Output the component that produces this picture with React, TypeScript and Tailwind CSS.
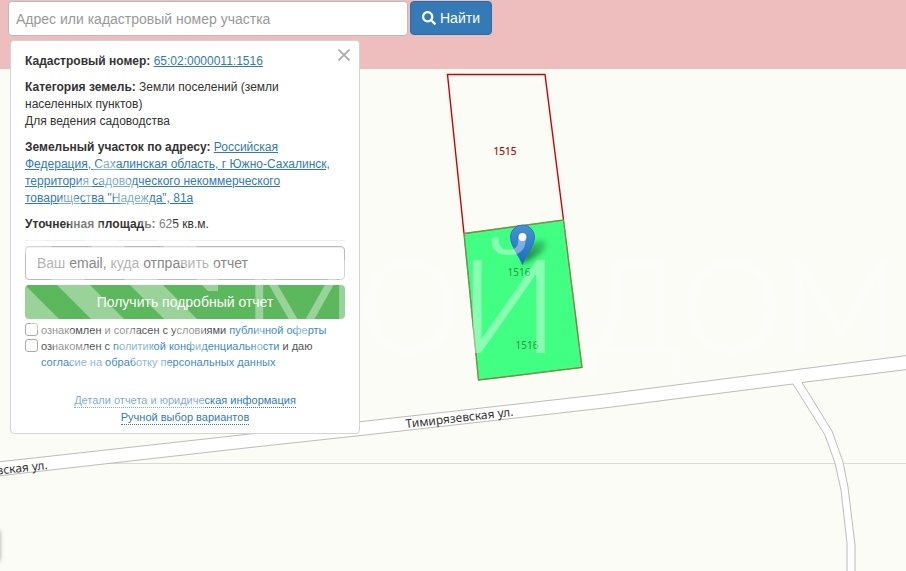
import React, { useState } from "react";
import { FaSearch } from "react-icons/fa";

const MapLayer: React.FC = () => (
  <svg
    className="absolute left-0 top-0 h-[571px] w-[906px] overflow-visible"
    viewBox="0 0 906 571"
    aria-hidden="true"
  >
    <defs>
      <linearGradient id="pin" x1="0" y1="0" x2="0" y2="1">
        <stop offset="0" stopColor="#4694d4" />
        <stop offset="1" stopColor="#1b6bc2" />
      </linearGradient>
      <linearGradient id="pinShadow" x1="0" y1="1" x2="1" y2="0">
        <stop offset="0.2" stopColor="#000" stopOpacity="0.5" />
        <stop offset="1" stopColor="#000" stopOpacity="0.1" />
      </linearGradient>
      <filter id="soft" x="-30%" y="-30%" width="160%" height="160%">
        <feGaussianBlur stdDeviation="2.5" />
      </filter>
    </defs>

    <path d="M0 463.5H906" stroke="#d8dad5" strokeWidth="1" />

    {/* Streets */}
    <path
      d="M-5 462.3L250 434L370 420.6L600 394.7L911 355V369L802 382.5L832 431L843 462L848 487L855 545V576H847V543L841 490L835 463L825 435L793 384L600 408.5L370 434.5L250 447.5L-5 476.3Z"
      fill="#fff"
      stroke="#bcbcb8"
      strokeWidth="1"
    />
    <g fill="#333" fontFamily="Noto Sans, sans-serif" fontSize="12">
      <text transform="translate(406 428) rotate(-6.5)">Тимирязевская ул.</text>
      <text transform="translate(48 469) rotate(-6.5)" textAnchor="end">
        вская ул.
      </text>
    </g>

    {/* Parcels */}
    <path
      d="M464 233.5L447.5 74.5H545L563.5 220"
      fill="none"
      stroke="#d00000"
      strokeWidth="1.4"
    />
    <path
      d="M464 233.5L563.5 220L582 367.5L478.5 380Z"
      fill="#40ff82"
      stroke="#2fae43"
      strokeWidth="1.4"
    />
    <path
      d="M464 233.5L563.5 220L582 367.5L478.5 380Z"
      fill="none"
      stroke="#ef5b50"
      strokeWidth="1"
      strokeDasharray="5 4"
    />
    <g fontFamily="Noto Sans, sans-serif" fontSize="10" textAnchor="middle">
      <text x="505" y="155" fill="#a80d0d" stroke="#a80d0d" strokeWidth="0.2">
        1515
      </text>
      <text x="519" y="276" fill="#2c9a44">1516</text>
      <text x="527" y="349" fill="#2c9a44">1516</text>
    </g>

    {/* Pin */}
    <path
      d="M522 264C524 252 530 243 539 240C548 238 549 246 542 252C536 257 529 260 522 264Z"
      fill="url(#pinShadow)"
      filter="url(#soft)"
    />
    <path
      d="M522.5 264.5C520 257 510.5 246 510.5 237A12 12 0 0 1 534.5 237C534.5 246 525 257 522.5 264.5Z"
      fill="url(#pin)"
      stroke="#2f76b5"
      strokeWidth="1"
    />
    <circle cx="522.5" cy="237" r="4.5" fill="#fff" stroke="#2e6c97" strokeWidth="0.8" />
  </svg>
);

const Watermark: React.FC = () => (
  <svg
    className="pointer-events-none absolute left-0 top-0 h-[571px] w-[906px]"
    viewBox="0 0 906 571"
    aria-hidden="true"
  >
    <defs>
      <clipPath id="house">
        <path d="M118 145L218 245V291L205 291V410H25V235Z" />
      </clipPath>
    </defs>
    <g fill="#fff" opacity="0.38">
      <g clipPath="url(#house)">
        <path d="M-53 240L-20 240L150 410L117 410Z" />
        <path d="M-88 140L-55 140L215 410L182 410Z" />
        <path d="M-15 140L18 140L288 410L255 410Z" />
        <path d="M57 140L90 140L360 410L327 410Z" />
        <path d="M68 150H92V205L68 182Z" />
        <path d="M25 392H205V410H25Z" />
      </g>
      <g
        fontFamily="Lato, sans-serif"
        fontSize="128"
        fontWeight="300"
        stroke="#fff"
        strokeWidth="2"
      >
        <text x="243" y="352">МОЙ</text>
        <text x="586" y="352">ДОМ</text>
      </g>
    </g>
  </svg>
);

const linkClass = "text-[#337ab7] underline";
const checkboxClass =
  "mt-px size-[13px] shrink-0 appearance-none rounded-[3px] border border-[#aaa] bg-white checked:bg-[#337ab7]";

const ParcelCard: React.FC<{ onClose: () => void }> = ({ onClose }) => {
  const [email, setEmail] = useState("");

  return (
    <section className="relative ml-[10px] mt-1 w-full max-w-[350px] rounded border border-[#d4d4d4] bg-white px-[14px] pb-2 pt-3 text-xs leading-[17px] text-[#333]">
      <button
        type="button"
        aria-label="Закрыть"
        onClick={onClose}
        className="absolute right-[5px] top-1 flex size-5 items-center justify-center"
      >
        <svg className="size-3" viewBox="0 0 12 12">
          <path d="M0.5 0.5L11.5 11.5M11.5 0.5L0.5 11.5" stroke="#aaa" strokeWidth="1.7" />
        </svg>
      </button>

      <div className="space-y-[9px]">
        <p>
          <b>Кадастровый номер:</b>{" "}
          <a href="#parcel" className={linkClass}>
            65:02:0000011:1516
          </a>
        </p>
        <p className="pr-10">
          <b>Категория земель:</b> Земли поселений (земли населенных пунктов)
          <br />
          Для ведения садоводства
        </p>
        <p>
          <b>Земельный участок по адресу:</b>{" "}
          <a href="#address" className={linkClass}>
            Российская Федерация, Сахалинская область, г Южно-Сахалинск,
            территория садоводческого некоммерческого товарищества "Надежда",
            81а
          </a>
        </p>
        <p>
          <b>Уточненная площадь:</b> 625 кв.м.
        </p>
      </div>

      <form
        className="mt-[7px] border-t border-[#eee] pt-[5px]"
        onSubmit={(e) => e.preventDefault()}
      >
        <input
          type="email"
          aria-label="Ваш email"
          placeholder="Ваш email, куда отправить отчет"
          value={email}
          onChange={(e) => setEmail(e.target.value)}
          className="block h-[34px] w-full rounded border border-[#bbb] bg-white px-[11px] text-sm shadow-[inset_0_1px_1px_rgba(0,0,0,0.075)] placeholder:text-[#888]"
        />
        <button
          type="submit"
          className="mt-[5px] block h-[34px] w-full rounded bg-[#5cb85c] text-sm text-white"
        >
          Получить подробный отчет
        </button>

        <div className="mt-[3px] text-[11px] leading-4 text-[#555]">
          <div className="flex items-start gap-[3px]">
            <input id="offer" type="checkbox" className={checkboxClass} />
            <label htmlFor="offer">
              ознакомлен и согласен с условиями{" "}
              <a href="#offer-text" className="text-[#428bca]">
                публичной оферты
              </a>
            </label>
          </div>
          <div className="flex items-start gap-[3px]">
            <input id="privacy" type="checkbox" className={checkboxClass} />
            <label htmlFor="privacy">
              ознакомлен с{" "}
              <a href="#privacy-text" className="text-[#428bca]">
                политикой конфиденциальности
              </a>{" "}
              и даю
              <br />
              <a href="#consent" className="text-[#428bca]">
                согласие на обработку персональных данных
              </a>
            </label>
          </div>
        </div>
      </form>

      <div className="mt-6 flex flex-col items-center gap-[3px] text-[11px] leading-[13px] text-[#337ab7]">
        <a href="#details" className="border-b border-dotted border-[#337ab7]">
          Детали отчета и юридическая информация
        </a>
        <a href="#manual" className="border-b border-dotted border-[#337ab7]">
          Ручной выбор вариантов
        </a>
      </div>
    </section>
  );
};

const App: React.FC = () => {
  const [query, setQuery] = useState("");
  const [open, setOpen] = useState(true);

  return (
    <div className="relative min-h-screen overflow-hidden bg-[#fbfcf6] font-['Liberation_Sans',sans-serif]">
      <MapLayer />
      <div className="absolute inset-x-0 top-0 h-[69px] bg-[#eebdbe]" />
      {/* Edge of the collapsed map control */}
      <div className="absolute -left-2 top-[530px] h-8 w-2 rounded shadow-[0_0_4px_rgba(0,0,0,0.35)]" />

      <main className="relative">
        <form
          className="flex gap-0.5 pl-2 pt-px"
          onSubmit={(e) => e.preventDefault()}
        >
          <input
            type="text"
            aria-label="Адрес или кадастровый номер участка"
            placeholder="Адрес или кадастровый номер участка"
            value={query}
            onChange={(e) => setQuery(e.target.value)}
            className="h-[35px] w-full max-w-[400px] rounded border border-[#bbb] bg-white px-[7px] text-sm placeholder:text-[#999]"
          />
          <button
            type="submit"
            className="flex h-[34px] items-center gap-1 rounded border border-[#2e6da4] bg-[#337ab7] px-[11px] text-sm text-white"
          >
            <FaSearch size={14} />
            Найти
          </button>
        </form>

        {open && <ParcelCard onClose={() => setOpen(false)} />}
      </main>

      <Watermark />
    </div>
  );
};

export default App;
